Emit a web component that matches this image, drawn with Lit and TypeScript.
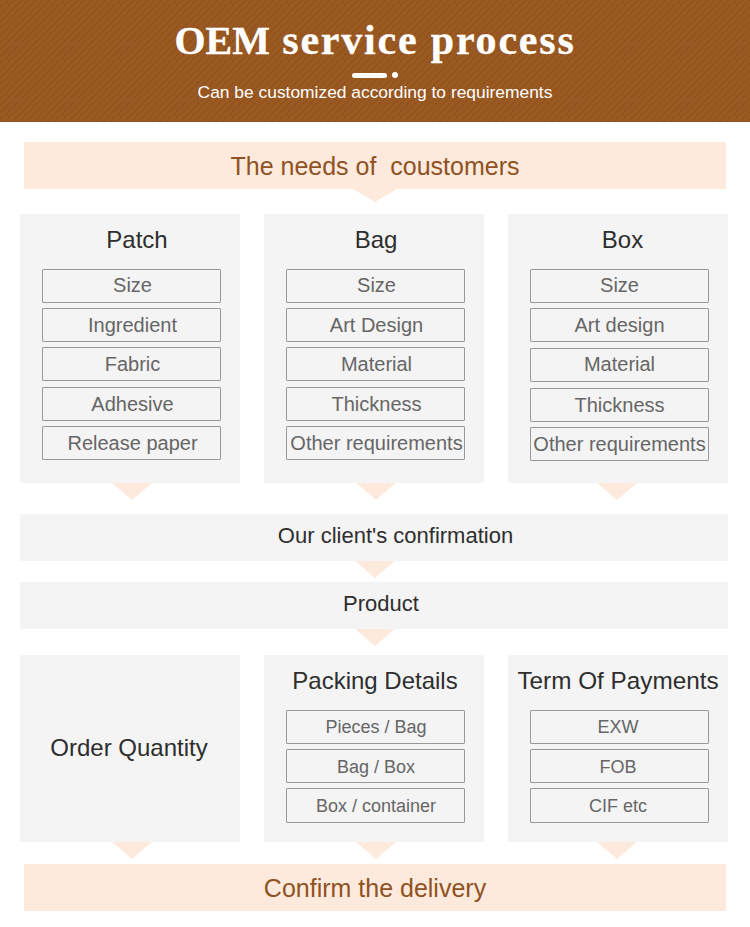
import { LitElement, html, css } from "lit";
import { customElement } from "lit/decorators.js";

interface Col { title: string; items: string[]; gaps: number[]; cls: string }

const cols: Col[] = [
  { title: "Patch", items: ["Size", "Ingredient", "Fabric", "Adhesive", "Release paper"], gaps: [5, 5, 6, 5], cls: "c1" },
  { title: "Bag", items: ["Size", "Art Design", "Material", "Thickness", "Other requirements"], gaps: [5, 5, 6, 5], cls: "c2" },
  { title: "Box", items: ["Size", "Art design", "Material", "Thickness", "Other requirements"], gaps: [5, 6, 6, 5], cls: "c3" },
];

const arrow = html`<svg class="arrow" width="40" height="17" viewBox="0 0 40 17"><path d="M0 0H40L20 17Z" fill="#feeadd"/></svg>`;

@customElement("app-root")
export class AppRoot extends LitElement {
  static styles = css`
    :host { display: block; width: 750px; height: 927px; background: #fff; font-family: "Liberation Sans", Arial, sans-serif; overflow: hidden; }
    * { box-sizing: border-box; }
    .head {
      height: 122px; display: flex; flex-direction: column; align-items: center; color: #fff;
      background-color: #9a5920;
      background-image: linear-gradient(135deg, #8c4f1d 10%, transparent 10% 50%, #8c4f1d 50% 60%, transparent 60%);
      background-size: 7px 7px;
    }
    h1 { margin: 18px 0 0; height: 44px; font: bold 42px/44px "Liberation Serif", serif; letter-spacing: 1.8px; white-space: nowrap; -webkit-text-stroke: .3px #fff; }
    h1 span { font-size: 40px; letter-spacing: 0; }
    .deco { display: flex; align-items: center; gap: 5px; margin-top: 10px; height: 6px; }
    .deco i { display: block; width: 35px; height: 5px; border-radius: 3px; background: #fff; }
    .deco b { display: block; width: 6px; height: 6px; border-radius: 50%; background: #fff; }
    .sub { margin-top: 4px; font-size: 17.4px; line-height: 20px; white-space: nowrap; }
    .main { padding: 20px 22px 0 20px; display: flex; flex-direction: column; }
    .banner {
      position: relative; margin: 0 0 0 4px; width: 702px; height: 47px; background: #feeadd; color: #8f5222;
      font-size: 25px; display: flex; align-items: center; justify-content: center; padding-top: 2px;
    }
    .banner span { white-space: pre; }
    .row { display: flex; gap: 24px; }
    .col { position: relative; width: 220px; background: #f4f4f4; display: flex; flex-direction: column; align-items: center; }
    .top { margin-top: 25px; height: 269px; }
    .col h2 { margin: 12px 0 0; height: 28px; font-weight: 400; font-size: 24px; line-height: 28px; color: #2e2e2e; white-space: nowrap; }
    .c1 h2 { margin-left: 14px; }
    .c2 h2 { margin-left: 4px; }
    .c3 h2 { margin-left: 9px; }
    .pack h2 { margin-left: 2px; }
    .list { display: flex; flex-direction: column; width: 179px; margin: 15px 0 0 3px; }
    .item {
      height: 34px; border: 1px solid #999; border-radius: 1px; display: flex; align-items: center; justify-content: center;
      color: #666; font-size: 20px; white-space: nowrap;
    }
    .item:first-child { padding-bottom: 2px; }
    .c3 .item:nth-child(3) { padding-bottom: 2px; }
    .c1 .item { padding-left: 2px; }
    .c2 .item { padding-left: 2px; }
    .small .item { font-size: 18px; padding-bottom: 0; padding-top: 2px; }
    .small .item:first-child { padding-top: 0; }
    .small .item:last-child { height: 35px; padding-top: 1px; }
    .pack .item { padding-left: 1px; }
    .pay h2 { font-size: 24.3px; }
    .pay .item { padding-right: 3px; }
    .arrow { position: absolute; top: 100%; left: 92px; display: block; }
    .c3 .arrow, .pay .arrow { left: 89px; }
    .wide {
      position: relative; width: 708px; height: 47px; background: #f4f4f4; color: #2e2e2e; font-size: 22px;
      display: flex; align-items: center; justify-content: center; padding-bottom: 4px;
    }
    .wide .arrow { left: 335px; }
    .w1 { margin-top: 31px; padding-left: 43px; }
    .w2 { margin-top: 21px; padding-left: 14px; }
    .bottom { margin-top: 26px; height: 187px; }
    .qty { justify-content: center; font-size: 24px; color: #2e2e2e; }
    .qty span { margin-left: -2px; margin-top: -2px; }
    .bsm { margin-top: 22px; }
    .tri-top { position: absolute; top: 100%; left: 329px; display: block; }
  `;

  render() {
    return html`
      <div class="head">
        <h1><span>OEM</span> service process</h1>
        <div class="deco"><i></i><b></b></div>
        <div class="sub">Can be customized according to requirements</div>
      </div>
      <div class="main">
        <div class="banner"><span>The needs of  coustomers</span>
          <svg class="tri-top" width="44" height="13" viewBox="0 0 44 13"><path d="M0 0H44L22 13Z" fill="#feeadd"/></svg>
        </div>
        <div class="row top">
          ${cols.map((c) => html`
            <div class="col ${c.cls}">
              <h2>${c.title}</h2>
              <div class="list">
                ${c.items.map((t, i) => html`<div class="item" style="margin-top:${i ? c.gaps[i - 1] : 0}px">${t}</div>`)}
              </div>
              ${arrow}
            </div>`)}
        </div>
        <div class="wide w1">Our client's confirmation${arrow}</div>
        <div class="wide w2">Product${arrow}</div>
        <div class="row bottom">
          <div class="col qty"><span>Order Quantity</span>${arrow}</div>
          <div class="col small pack">
            <h2>Packing Details</h2>
            <div class="list">
              ${["Pieces / Bag", "Bag / Box", "Box / container"].map((t, i) => html`<div class="item" style="margin-top:${i ? 5 : 0}px">${t}</div>`)}
            </div>
            ${arrow}
          </div>
          <div class="col small pay">
            <h2>Term Of Payments</h2>
            <div class="list">
              ${["EXW", "FOB", "CIF etc"].map((t, i) => html`<div class="item" style="margin-top:${i ? 5 : 0}px">${t}</div>`)}
            </div>
            ${arrow}
          </div>
        </div>
        <div class="banner bsm">Confirm the delivery</div>
      </div>
    `;
  }
}
